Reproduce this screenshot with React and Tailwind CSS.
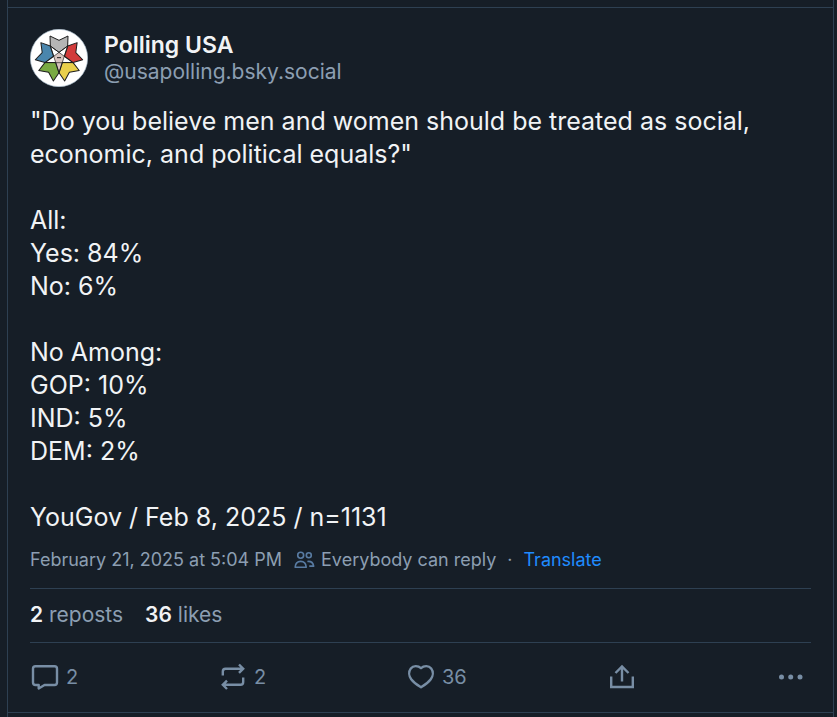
const lines = [
  '"Do you believe men and women should be treated as social, economic, and political equals?"',
  "",
  "All:",
  "Yes: 84%",
  "No: 6%",
  "",
  "No Among:",
  "GOP: 10%",
  "IND: 5%",
  "DEM: 2%",
  "",
  "YouGov / Feb 8, 2025 / n=1131",
];

const arrows = [
  { angle: 0, color: "#b5b5b5" },
  { angle: 72, color: "#d23b3b" },
  { angle: 144, color: "#ead04b" },
  { angle: 216, color: "#79aa43" },
  { angle: 288, color: "#4a86ad" },
];

function Avatar() {
  return (
    <svg viewBox="-87 -87 174 174" className="size-[58px] shrink-0" role="img" aria-label="Polling USA avatar">
      <circle r="86" fill="#fff" stroke="#a9bccb" strokeWidth="2" />
      <path d="M0 -17 L16 -5 L10 14 L0 44 L-10 14 L-16 -5Z" fill="#d8c4bf" />
      <g stroke="#1d1d1d" strokeWidth="3" strokeLinejoin="round">
        {arrows.map(({ angle, color }) => (
          <path
            key={angle}
            transform={`rotate(${angle})`}
            d="M-27 -66 L0 -53 L27 -66 L26 -36 L0 -17 L-26 -36Z"
            fill={color}
          />
        ))}
        <path d="M-26 -36 L42 14 H-42 L26 -36 L0 44Z" fill="none" strokeWidth="2" />
        <path d="M-6 -1 H6" fill="none" />
      </g>
    </svg>
  );
}

function Icon({ children }) {
  return (
    <svg viewBox="0 0 30 30" className="size-[30px] shrink-0" fill="none" stroke="currentColor" strokeWidth="2.4" aria-hidden="true">
      {children}
    </svg>
  );
}

export default function App() {
  return (
    <div className="min-h-screen bg-[#161e27] pr-[3px] pl-[7px] font-['Inter','Liberation_Sans',sans-serif] text-[#f1f3f5]">
      <main className="min-h-screen border-x border-[#2e4052] pt-[7px]">
        <article className="border-y border-[#2e4052] px-[22px] pt-[21px]">
          <header className="flex items-center gap-4">
            <Avatar />
            <div>
              <h1 className="text-[23px] leading-7 font-semibold">Polling USA</h1>
              <a href="#profile" className="block text-[21px] leading-[26px] text-[#8c9eb2]">@usapolling.bsky.social</a>
            </div>
          </header>

          <div className="mt-[18px] text-[25px] leading-[33px]">
            {lines.map((line, i) => (
              <p key={i} className="min-h-[33px]">{line}</p>
            ))}
          </div>

          <div className="mt-[10px] flex h-8 items-center text-[18px] leading-6 text-[#8c9eb2]">
            <time>February 21, 2025 at 5:04 PM</time>
            <button type="button" className="ml-3 flex items-center gap-[6px]">
              <svg viewBox="0 0 22 20" className="h-5 w-[21px] text-[#587ba2]" fill="none" stroke="currentColor" strokeWidth="1.7" aria-hidden="true">
                <circle cx="7" cy="5" r="3.1" />
                <circle cx="15.5" cy="5" r="2.6" />
                <path d="M1.2 17.6C1.5 13.5 3.8 11.5 7 11.5S12.5 13.5 12.8 17.6Z" strokeLinejoin="round" />
                <path d="M14 11.5C17.8 11 20 13 20.6 16.4H16" strokeLinejoin="round" />
              </svg>
              Everybody can reply
            </button>
            <span className="mx-[11px]">·</span>
            <a href="#translate" className="text-[#208bfe]">Translate</a>
          </div>

          <div className="mt-3 flex h-[55px] items-center gap-[22px] border-y border-[#2e4052] pb-[2px] text-[21px] text-[#8c9eb2]">
            <a href="#reposts"><strong className="font-semibold text-[#f1f3f5]">2</strong> reposts</a>
            <a href="#likes"><strong className="font-semibold text-[#f1f3f5]">36</strong> likes</a>
          </div>

          <div className="flex h-[69px] items-center justify-between pr-[5px] pb-[2px] text-[20px] text-[#788ea5]">
            <div className="grid w-[564px] grid-cols-3">
              <button type="button" aria-label="Reply, 2 replies" className="flex items-center gap-[6px]">
                <Icon>
                  <path d="M5.5 4.2H24.5Q27 4.2 27 6.7V20.5Q27 23 24.5 23H14.5L8.7 26.5V23H5.5Q3 23 3 20.5V6.7Q3 4.2 5.5 4.2Z" strokeLinejoin="round" />
                </Icon>
                2
              </button>
              <button type="button" aria-label="Repost, 2 reposts" className="flex items-center gap-[6px]">
                <Icon>
                  <path d="M21 2.5L25.2 6.7L21 10.9M25 6.7H7.5Q4.8 6.7 4.8 9.4V13.5M9 18.6L4.8 22.8L9 27M5 22.8H22.5Q25.2 22.8 25.2 20.1V15.5" />
                </Icon>
                2
              </button>
              <button type="button" aria-label="Like, 36 likes" className="flex items-center gap-[6px]">
                <Icon>
                  <path d="M15 6.2C12 3.4 7.2 3.4 4.8 6.5C2.5 9.5 2.8 14 5.2 17.2C7.8 20.7 11.6 23.3 15 25.3C18.4 23.3 22.2 20.7 24.8 17.2C27.2 14 27.5 9.5 25.2 6.5C22.8 3.4 18 3.4 15 6.2Z" strokeLinejoin="round" />
                </Icon>
                36
              </button>
            </div>
            <button type="button" aria-label="Share">
              <Icon>
                <path d="M15 19.5V4.5M8.5 11L15 4.5L21.5 11M4.2 14.5V25H25.8V14.5" />
              </Icon>
            </button>
            <button type="button" aria-label="More options" className="ml-[126px]">
              <Icon>
                <g fill="currentColor" stroke="none">
                  <circle cx="5.5" cy="15" r="2.5" />
                  <circle cx="14.7" cy="15" r="2.5" />
                  <circle cx="24" cy="15" r="2.5" />
                </g>
              </Icon>
            </button>
          </div>
        </article>
      </main>
    </div>
  );
}
